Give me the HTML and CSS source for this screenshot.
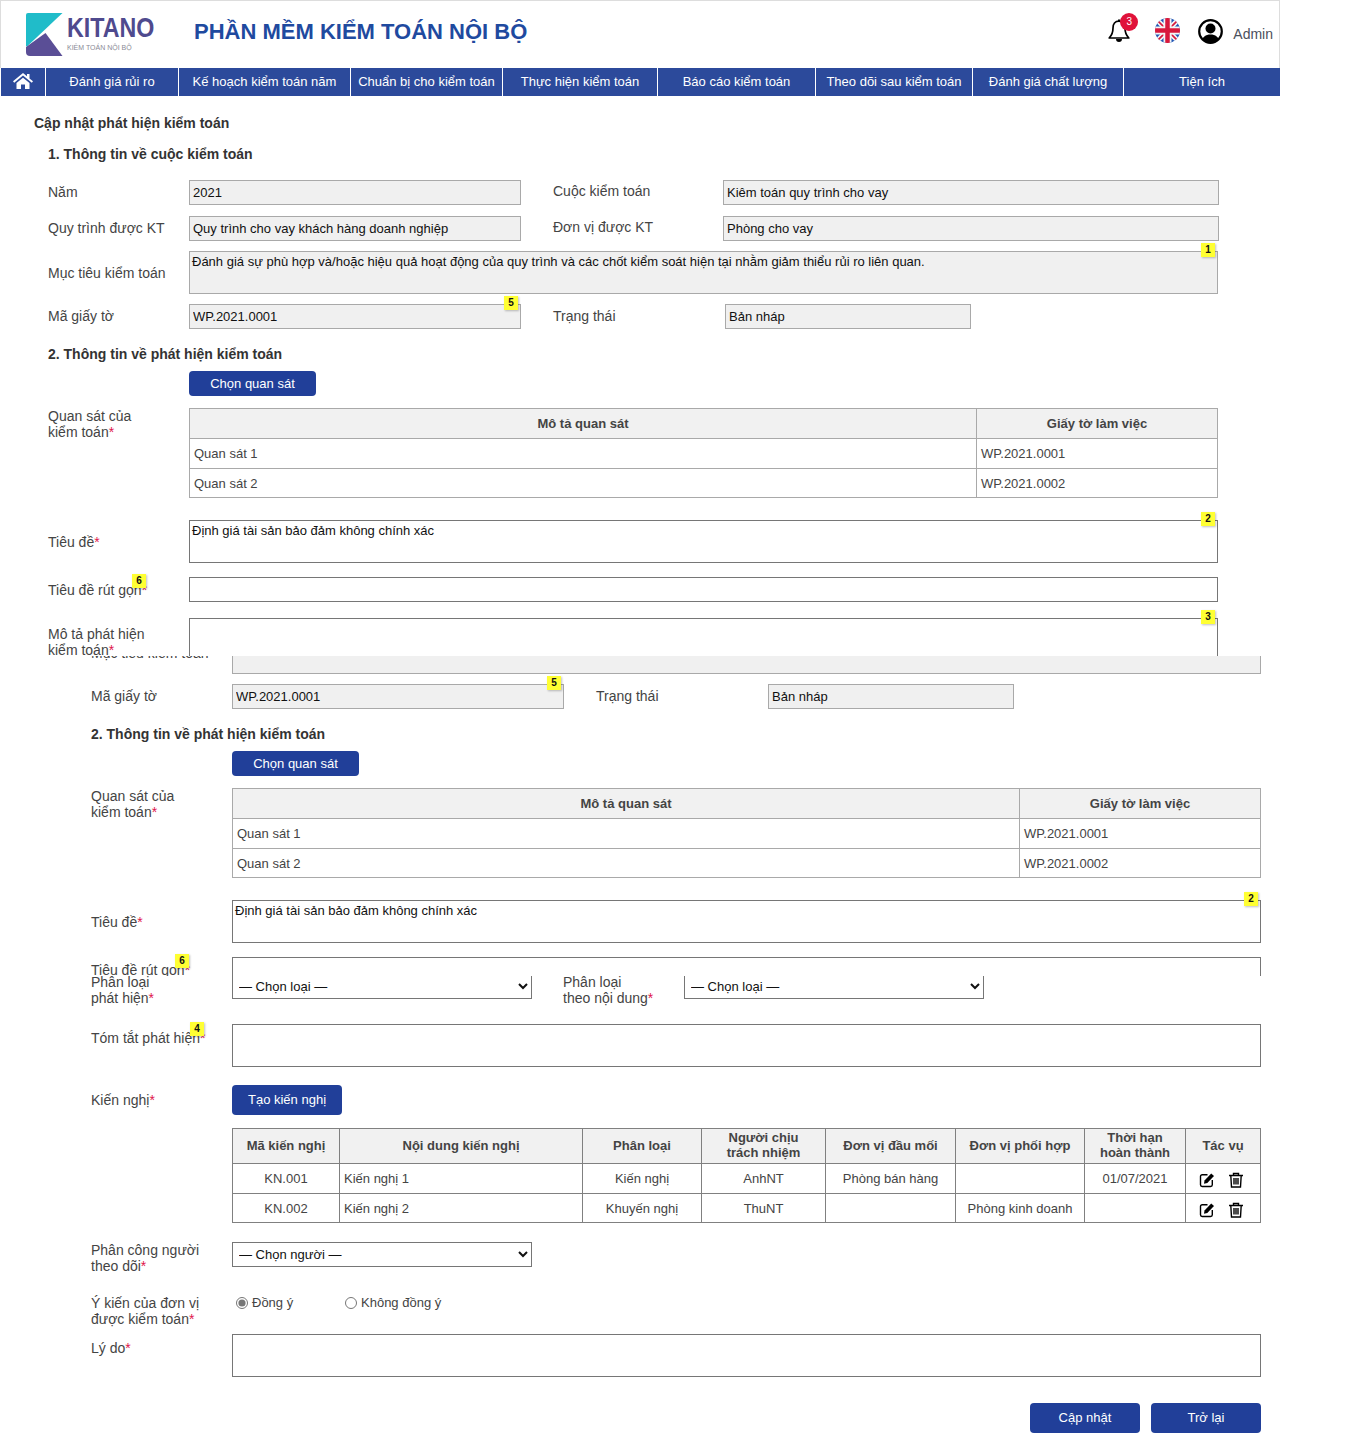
FILE: index.html
```html
<!DOCTYPE html>
<html lang="vi">
<head>
<meta charset="utf-8">
<title>Cập nhật phát hiện kiểm toán</title>
<link rel="stylesheet" href="styles.css">
</head>
<body>
<section class="strip strip-a">
  <header class="topbar">
    <div class="logo">
      <svg class="logo-mark" viewBox="0 0 37 43" width="37" height="43">
        <path d="M2 0H36.500L1 33.500 0 33V2a2 2 0 0 1 2-2z" fill="#20bcc9"/>
        <path d="M19.500 20L36.500 43H4a4 4 0 0 1-4-4V34z" fill="#5a4e96"/>
      </svg>
      <div class="logo-text"><span class="logo-name">KITANO</span><span class="logo-sub">KIỂM TOÁN NỘI BỘ</span></div>
    </div>
    <h1 class="app-title">PHẦN MỀM KIỂM TOÁN NỘI BỘ</h1>
    <div class="tools">
      <span class="bell">
        <svg viewBox="0 0 22 25" width="22" height="25"><path d="M11 3.200C7 3.200 5 6 5 10c0 5.500-1.300 7.500-3.800 10h19.600C18.300 17.500 17 15.500 17 10c0-4-2-6.800-6-6.800z" fill="none" stroke="#000" stroke-width="1.700" stroke-linejoin="round"/><path d="M10 1.500h2v2h-2zM8 21h6a3 3 0 0 1-6 0z" fill="#000"/></svg>
        <span class="bell-count">3</span>
      </span>
      <svg class="flag" viewBox="0 0 25 25" width="25" height="25">
        <defs><clipPath id="flagclip"><circle cx="12.500" cy="12.500" r="12.500"/></clipPath></defs>
        <g clip-path="url(#flagclip)">
          <rect width="25" height="25" fill="#1f55b5"/>
          <path d="M0 0L25 25M25 0L0 25" stroke="#f4f4f4" stroke-width="5"/>
          <path d="M0 0L25 25M25 0L0 25" stroke="#d8183c" stroke-width="1.600"/>
          <path d="M12.500 0V25M0 12.500H25" stroke="#f4f4f4" stroke-width="8"/>
          <path d="M12.500 0V25M0 12.500H25" stroke="#d8183c" stroke-width="4.500"/>
        </g>
      </svg>
      <svg class="avatar" viewBox="0 0 25 25" width="25" height="25">
        <defs><clipPath id="avclip"><circle cx="12.500" cy="12.500" r="11"/></clipPath></defs>
        <circle cx="12.500" cy="12.500" r="11.300" fill="#fff" stroke="#000" stroke-width="2.200"/>
        <g clip-path="url(#avclip)"><circle cx="12.500" cy="9.500" r="5"/><path d="M3.500 25c0-7 4-9.500 9-9.500s9 2.500 9 9.500z"/></g>
      </svg>
      <span class="admin">Admin</span>
    </div>
  </header>
  <nav class="mainnav">
    <a class="nav-item nav-home"><svg viewBox="0 0 20 16" width="20" height="16"><path d="M10 0L0 8.300l1.200 1.400L10 2.500l8.800 7.200L20 8.300 16.500 5.400V1h-2.500v2.300zM3.500 10v6H8v-4.500h4V16h4.500v-6L10 4.700z" fill="#fff"/></svg></a>
    <a class="nav-item nav-w1">Đánh giá rủi ro</a>
    <a class="nav-item nav-w2">Kế hoạch kiểm toán năm</a>
    <a class="nav-item nav-w3">Chuẩn bị cho kiểm toán</a>
    <a class="nav-item nav-w4">Thực hiện kiểm toán</a>
    <a class="nav-item nav-w5">Báo cáo kiểm toán</a>
    <a class="nav-item nav-w6">Theo dõi sau kiểm toán</a>
    <a class="nav-item nav-w7">Đánh giá chất lượng</a>
    <a class="nav-item nav-w8">Tiện ích</a>
  </nav>
  <h2 class="page-title">Cập nhật phát hiện kiểm toán</h2>
  <div class="form">
    <h3 class="section-title">1. Thông tin về cuộc kiểm toán</h3>
    <div class="row gap-18">
      <label class="lb lift">Năm</label>
      <input class="field f-short ro" readonly value="2021">
      <label class="lb-right up">Cuộc kiểm toán</label>
      <input class="field f-long ro" readonly value="Kiêm toán quy trình cho vay">
    </div>
    <div class="row gap-11">
      <label class="lb lift">Quy trình được KT</label>
      <input class="field f-short ro" readonly value="Quy trình cho vay khách hàng doanh nghiệp">
      <label class="lb-right up">Đơn vị được KT</label>
      <input class="field f-long ro" readonly value="Phòng cho vay">
    </div>
    <div class="row gap-10">
      <label class="lb">Mục tiêu kiểm toán</label>
      <div class="wrap"><textarea class="area ro" readonly>Đánh giá sự phù hợp và/hoặc hiệu quả hoạt động của quy trình và các chốt kiểm soát hiện tại nhằm giảm thiểu rủi ro liên quan.</textarea><span class="tag tag-r">1</span></div>
    </div>
    <div class="row gap-10">
      <label class="lb lift">Mã giấy tờ</label>
      <div class="wrap"><input class="field f-short ro" readonly value="WP.2021.0001"><span class="tag tag-r">5</span></div>
      <label class="lb-right lift">Trạng thái</label>
      <input class="field f-status ro" readonly value="Bản nháp">
    </div>
    <h3 class="section-title gap-17">2. Thông tin về phát hiện kiểm toán</h3>
    <div class="row gap-9"><span class="lb"></span><button class="btn btn-pick" type="button">Chọn quan sát</button></div>
    <div class="row row-top gap-12">
      <label class="lb">Quan sát của<br>kiểm toán<b class="req">*</b></label>
      <table class="grid grid-light">
        <colgroup><col class="c-desc"><col class="c-doc"></colgroup>
        <thead><tr><th>Mô tả quan sát</th><th>Giấy tờ làm việc</th></tr></thead>
        <tbody>
          <tr><td>Quan sát 1</td><td>WP.2021.0001</td></tr>
          <tr><td>Quan sát 2</td><td>WP.2021.0002</td></tr>
        </tbody>
      </table>
    </div>
    <div class="row gap-22">
      <label class="lb">Tiêu đề<b class="req">*</b></label>
      <div class="wrap"><textarea class="area" readonly>Định giá tài sản bảo đảm không chính xác</textarea><span class="tag tag-r">2</span></div>
    </div>
    <div class="row gap-14">
      <label class="lb wrap">Tiêu đề rút gọn<b class="req">*</b><span class="tag tag-l6">6</span></label>
      <input class="field f-full">
    </div>
    <div class="row row-top gap-16">
      <label class="lb drop-8">Mô tả phát hiện<br>kiểm toán<b class="req">*</b></label>
      <div class="wrap"><textarea class="area" readonly></textarea><span class="tag tag-r">3</span></div>
    </div>
  </div>
</section>

<section class="strip strip-b">
  <div class="form">
    <div class="row pull-25">
      <label class="lb">Mục tiêu kiểm toán</label>
      <textarea class="area ro" readonly></textarea>
    </div>
    <div class="row gap-10">
      <label class="lb lift">Mã giấy tờ</label>
      <div class="wrap"><input class="field f-short ro" readonly value="WP.2021.0001"><span class="tag tag-r">5</span></div>
      <label class="lb-right lift">Trạng thái</label>
      <input class="field f-status ro" readonly value="Bản nháp">
    </div>
    <h3 class="section-title gap-17">2. Thông tin về phát hiện kiểm toán</h3>
    <div class="row gap-9"><span class="lb"></span><button class="btn btn-pick" type="button">Chọn quan sát</button></div>
    <div class="row row-top gap-12">
      <label class="lb">Quan sát của<br>kiểm toán<b class="req">*</b></label>
      <table class="grid grid-light">
        <colgroup><col class="c-desc"><col class="c-doc"></colgroup>
        <thead><tr><th>Mô tả quan sát</th><th>Giấy tờ làm việc</th></tr></thead>
        <tbody>
          <tr><td>Quan sát 1</td><td>WP.2021.0001</td></tr>
          <tr><td>Quan sát 2</td><td>WP.2021.0002</td></tr>
        </tbody>
      </table>
    </div>
    <div class="row gap-22">
      <label class="lb">Tiêu đề<b class="req">*</b></label>
      <div class="wrap"><textarea class="area" readonly>Định giá tài sản bảo đảm không chính xác</textarea><span class="tag tag-r">2</span></div>
    </div>
    <div class="row gap-14">
      <label class="lb wrap">Tiêu đề rút gọn<b class="req">*</b><span class="tag tag-l6">6</span></label>
      <input class="field f-full">
    </div>
  </div>
</section>

<section class="strip strip-c">
  <div class="form">
    <div class="row row-top pull-2">
      <label class="lb">Phân loại<br>phát hiện<b class="req">*</b></label>
      <select class="pick"><option>— Chọn loại —</option></select>
      <label class="lb-inline">Phân loại<br>theo nội dung<b class="req">*</b></label>
      <select class="pick"><option>— Chọn loại —</option></select>
    </div>
    <div class="row row-top gap-18">
      <label class="lb drop-6 wrap">Tóm tắt phát hiện<b class="req">*</b><span class="tag tag-l4">4</span></label>
      <textarea class="area" readonly></textarea>
    </div>
    <div class="row gap-18">
      <label class="lb">Kiến nghị<b class="req">*</b></label>
      <button class="btn btn-create" type="button">Tạo kiến nghị</button>
    </div>
    <div class="row gap-13">
      <span class="lb"></span>
      <table class="grid grid-dark">
        <colgroup><col class="k1"><col class="k2"><col class="k3"><col class="k4"><col class="k5"><col class="k6"><col class="k7"><col class="k8"></colgroup>
        <thead>
          <tr><th>Mã kiến nghị</th><th>Nội dung kiến nghị</th><th>Phân loại</th><th>Người chịu<br>trách nhiệm</th><th>Đơn vị đầu mối</th><th>Đơn vị phối hợp</th><th>Thời hạn<br>hoàn thành</th><th>Tác vụ</th></tr>
        </thead>
        <tbody>
          <tr>
            <td class="mid">KN.001</td><td>Kiến nghị 1</td><td class="mid">Kiến nghị</td><td class="mid">AnhNT</td><td class="mid">Phòng bán hàng</td><td></td><td class="mid">01/07/2021</td>
            <td class="acts">
              <svg viewBox="0 0 16 16" width="16" height="16"><path d="M8.500 2.700H3.200A1.700 1.700 0 0 0 1.500 4.400v8.400a1.700 1.700 0 0 0 1.700 1.700h8.400a1.700 1.700 0 0 0 1.700-1.700V8" fill="none" stroke="#000" stroke-width="1.400"/><path d="M5.500 8.500L12.200 1.500 15 4.100 8.300 11 5 11.800z" fill="#000"/></svg>
              <svg viewBox="0 0 16 16" width="16" height="16"><path d="M1 3.500h14M5.500 3.500V1.500h5v2M2.800 3.500l.7 11.500h9l.7-11.500M6 6v6.500M8 6v6.500M10 6v6.500" fill="none" stroke="#000" stroke-width="1.400"/></svg>
            </td>
          </tr>
          <tr>
            <td class="mid">KN.002</td><td>Kiến nghị 2</td><td class="mid">Khuyến nghị</td><td class="mid">ThuNT</td><td></td><td class="mid">Phòng kinh doanh</td><td></td>
            <td class="acts">
              <svg viewBox="0 0 16 16" width="16" height="16"><path d="M8.500 2.700H3.200A1.700 1.700 0 0 0 1.500 4.400v8.400a1.700 1.700 0 0 0 1.700 1.700h8.400a1.700 1.700 0 0 0 1.700-1.700V8" fill="none" stroke="#000" stroke-width="1.400"/><path d="M5.500 8.500L12.200 1.500 15 4.100 8.300 11 5 11.800z" fill="#000"/></svg>
              <svg viewBox="0 0 16 16" width="16" height="16"><path d="M1 3.500h14M5.500 3.500V1.500h5v2M2.800 3.500l.7 11.500h9l.7-11.500M6 6v6.500M8 6v6.500M10 6v6.500" fill="none" stroke="#000" stroke-width="1.400"/></svg>
            </td>
          </tr>
        </tbody>
      </table>
    </div>
    <div class="row row-top gap-19">
      <label class="lb">Phân công người<br>theo dõi<b class="req">*</b></label>
      <select class="pick"><option>— Chọn người —</option></select>
    </div>
    <div class="row row-top gap-21">
      <label class="lb">Ý kiến của đơn vị<br>được kiểm toán<b class="req">*</b></label>
      <div class="radios">
        <label class="radio radio-yes"><input type="radio" name="opinion" checked>Đồng ý</label>
        <label class="radio"><input type="radio" name="opinion">Không đồng ý</label>
      </div>
    </div>
    <div class="row row-top gap-7">
      <label class="lb drop-6">Lý do<b class="req">*</b></label>
      <textarea class="area" readonly></textarea>
    </div>
    <div class="actions">
      <button class="btn btn-foot" type="button">Cập nhật</button>
      <button class="btn btn-foot" type="button">Trở lại</button>
    </div>
  </div>
</section>
</body>
</html>
```

FILE: styles.css
```css
* { box-sizing: border-box; }
html, body { margin: 0; padding: 0; background: #fff; }
body { font-family: "Liberation Sans", Arial, sans-serif; font-size: 14px; line-height: 16px; color: #444; }

.strip { overflow: hidden; width: 1366px; }
.strip-a { height: 656px; }
.strip-b { height: 320px; }
.strip-c { height: 457px; }
.strip-a .form { padding-left: 48px; }
.strip-b .form, .strip-c .form { padding-left: 91px; }

/* header */
.topbar { width: 1280px; height: 68px; border: 1px solid #ddd; border-bottom: 0; display: flex; align-items: center; padding-left: 25px; }
.logo { width: 168px; height: 43px; display: flex; flex: none; }
.logo-mark { flex: none; }
.logo-text { margin-left: 4px; display: flex; flex-direction: column; }
.logo-name { font-size: 27px; line-height: 24px; margin-top: 3px; font-weight: 700; color: #4f4a8e; transform: scaleX(.86); transform-origin: left center; }
.logo-sub { font-size: 7px; line-height: 9px; margin-top: 3px; color: #8a8a96; white-space: nowrap; }
.app-title { margin: 0 0 5px; font-size: 22px; line-height: 28px; font-weight: 700; color: #1f4a9f; white-space: nowrap; }
.tools { margin-left: auto; display: flex; align-items: center; margin-right: 6px; margin-bottom: 4px; }
.bell { position: relative; display: block; width: 22px; height: 25px; margin-bottom: 5px; }
.bell svg, .flag, .avatar { display: block; }
.bell-count { position: absolute; left: 12px; top: -5px; width: 18px; height: 18px; border-radius: 50%; background: #e0123a; color: #fff; font-size: 10px; line-height: 18px; text-align: center; }
.flag { margin-left: 25px; margin-bottom: 4px; }
.avatar { margin-left: 18px; margin-bottom: 2px; }
.admin { margin-left: 10px; margin-top: 2px; color: #4a4f5c; }

.mainnav { display: flex; width: 1279px; height: 28px; margin-left: 1px; background: #2c4a9b; }
.nav-item { display: flex; align-items: center; justify-content: center; height: 28px; font-size: 13px; color: #fff; white-space: nowrap; border-right: 1px solid #fff; flex: none; }
.nav-home { width: 45px; padding-bottom: 2px; }
.nav-w1 { width: 133px; }
.nav-w2 { width: 172px; }
.nav-w3 { width: 152px; }
.nav-w4 { width: 155px; }
.nav-w5 { width: 158px; }
.nav-w6 { width: 157px; }
.nav-w7 { width: 151px; }
.nav-w8 { width: 156px; border-right: 0; }

/* titles */
.page-title { margin: 19px 0 0 34px; font-size: 14px; line-height: 16px; font-weight: 700; color: #333; }
.section-title { margin: 15px 0 0; font-size: 14px; line-height: 16px; font-weight: 700; color: #333; }
.section-title.gap-17 { margin-top: 17px; }

/* rows */
.row { display: flex; align-items: center; }
.row-top { align-items: flex-start; }
.gap-7 { margin-top: 7px; }
.gap-9 { margin-top: 9px; }
.gap-10 { margin-top: 10px; }
.gap-11 { margin-top: 11px; }
.gap-12 { margin-top: 12px; }
.gap-13 { margin-top: 13px; }
.gap-14 { margin-top: 14px; }
.gap-16 { margin-top: 16px; }
.gap-18 { margin-top: 18px; }
.gap-19 { margin-top: 19px; }
.gap-21 { margin-top: 21px; }
.gap-22 { margin-top: 22px; }
.pull-25 { margin-top: -25px; }
.pull-2 { margin-top: -2px; }

.lb { width: 141px; flex: none; display: block; }
.drop-6 { margin-top: 6px; }
.drop-8 { margin-top: 8px; }
.lb-right { width: 170px; margin-left: 32px; flex: none; }
.lift { margin-bottom: 2px; }
.lb-right.up { margin-bottom: 4px; }
.lb-inline { width: 121px; margin-left: 31px; flex: none; }
.req { font-weight: 400; color: #e0164c; }
.wrap { position: relative; }

/* fields */
.field { display: block; height: 25px; padding: 0 3px; margin: 0; border: 1px solid #767676; background: #fff; font: 13px/16px "Liberation Sans", Arial, sans-serif; color: #111; outline: 0; border-radius: 0; }
.f-short { width: 332px; }
.f-long { width: 496px; }
.f-status { width: 246px; margin-left: 2px; }
.f-full { width: 1029px; }
.area { display: block; width: 1029px; height: 43px; padding: 2px; margin: 0; border: 1px solid #767676; background: #fff; font: 13px/16px "Liberation Sans", Arial, sans-serif; color: #111; resize: none; outline: 0; border-radius: 0; overflow: hidden; }
.ro { background: #f0f0f0; border-color: #a9a9a9; }
.pick { display: block; width: 300px; height: 25px; margin: 0; padding: 0 2px; border: 1px solid #767676; border-radius: 0; background-color: #fff; font: 13px "Liberation Sans", Arial, sans-serif; color: #111; flex: none; }

/* badges */
.tag { position: absolute; top: -8px; width: 14px; height: 14px; background: #ffff33; box-shadow: 1px 1px 2px rgba(0,0,0,.25); color: #111; font-size: 10px; line-height: 14px; font-weight: 700; text-align: center; }
.tag-r { right: 3px; }
.tag-l6 { left: 84px; }
.tag-l4 { left: 99px; }

/* buttons */
.btn { display: block; margin: 0; padding: 0; border: 0; border-radius: 4px; background: #213f99; color: #fff; font: 13px/16px "Liberation Sans", Arial, sans-serif; text-align: center; flex: none; }
.btn-pick { width: 127px; height: 25px; }
.btn-create { width: 110px; height: 30px; }
.btn-foot { width: 110px; height: 30px; }
.actions { display: flex; justify-content: flex-end; gap: 11px; width: 1170px; margin-top: 26px; }

/* tables */
.grid { width: 1028px; table-layout: fixed; border-collapse: collapse; flex: none; font-size: 13px; }
.grid th { background: #f1f1f1; font-weight: 700; color: #444; line-height: 15px; text-align: center; padding: 0 4px; }
.grid td { padding: 0 4px; color: #444; white-space: nowrap; }
.grid-light th, .grid-light td { border: 1px solid #a9a9a9; height: 30px; }
.grid-dark th, .grid-dark td { border: 1px solid #808080; }
.grid-dark th { height: 35px; padding-bottom: 2px; }
.grid-dark td { height: 30px; }
.grid tbody tr:last-child td { height: 29px; }
.grid tbody tr:last-child td:not(.acts) { padding-top: 1px; }
.c-desc { width: 787px; }
.c-doc { width: 241px; }
.k1 { width: 107px; }
.k2 { width: 243px; }
.k3 { width: 119px; }
.k4 { width: 124px; }
.k5 { width: 130px; }
.k6 { width: 129px; }
.k7 { width: 101px; }
.k8 { width: 75px; }
.grid td.mid { text-align: center; }
.grid td.acts { text-align: center; font-size: 0; padding: 3px 3px 0 0; }
.acts svg { margin: 0 6px; vertical-align: middle; }
.acts svg:first-child { margin: 0 7px 0 5px; }

/* radios */
.radios { display: flex; font-size: 13px; }
.radio { display: flex; align-items: center; }
.radio-yes { width: 109px; padding-left: 4px; }
.radio input { width: 12px; height: 12px; margin: 0 4px 0 0; accent-color: #767676; }
.radios .radio:last-child { padding-left: 4px; }
```
